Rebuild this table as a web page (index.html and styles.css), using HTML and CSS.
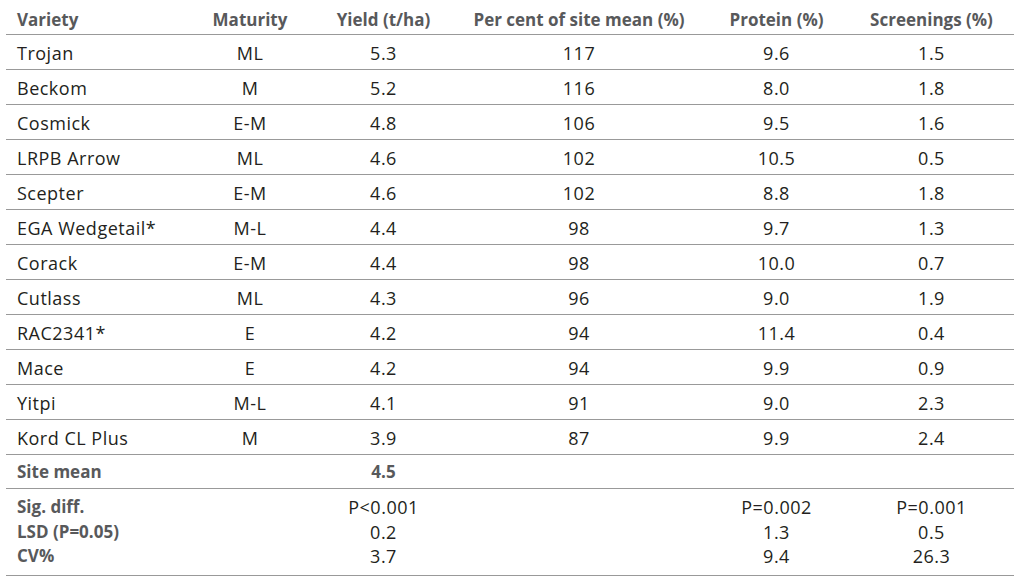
FILE: index.html
```html
<!DOCTYPE html>
<html>
<head>
<meta charset="utf-8">
<link rel="stylesheet" href="styles.css">
</head>
<body>
<table class="trial">
  <colgroup>
    <col class="c-variety">
    <col class="c-maturity">
    <col class="c-yield">
    <col class="c-percent">
    <col class="c-protein">
    <col class="c-screen">
  </colgroup>
  <thead>
    <tr>
      <th class="left">Variety</th>
      <th>Maturity</th>
      <th>Yield (t/ha)</th>
      <th>Per cent of site mean (%)</th>
      <th>Protein (%)</th>
      <th class="last">Screenings (%)</th>
    </tr>
  </thead>
  <tbody class="data">
    <tr><td class="left">Trojan</td><td>ML</td><td>5.3</td><td>117</td><td>9.6</td><td class="last">1.5</td></tr>
    <tr><td class="left">Beckom</td><td>M</td><td>5.2</td><td>116</td><td>8.0</td><td class="last">1.8</td></tr>
    <tr><td class="left">Cosmick</td><td>E-M</td><td>4.8</td><td>106</td><td>9.5</td><td class="last">1.6</td></tr>
    <tr><td class="left">LRPB Arrow</td><td>ML</td><td>4.6</td><td>102</td><td>10.5</td><td class="last">0.5</td></tr>
    <tr><td class="left">Scepter</td><td>E-M</td><td>4.6</td><td>102</td><td>8.8</td><td class="last">1.8</td></tr>
    <tr><td class="left">EGA Wedgetail*</td><td>M-L</td><td>4.4</td><td>98</td><td>9.7</td><td class="last">1.3</td></tr>
    <tr><td class="left">Corack</td><td>E-M</td><td>4.4</td><td>98</td><td>10.0</td><td class="last">0.7</td></tr>
    <tr><td class="left">Cutlass</td><td>ML</td><td>4.3</td><td>96</td><td>9.0</td><td class="last">1.9</td></tr>
    <tr><td class="left">RAC2341*</td><td>E</td><td>4.2</td><td>94</td><td>11.4</td><td class="last">0.4</td></tr>
    <tr><td class="left">Mace</td><td>E</td><td>4.2</td><td>94</td><td>9.9</td><td class="last">0.9</td></tr>
    <tr><td class="left">Yitpi</td><td>M-L</td><td>4.1</td><td>91</td><td>9.0</td><td class="last">2.3</td></tr>
    <tr><td class="left">Kord CL Plus</td><td>M</td><td>3.9</td><td>87</td><td>9.9</td><td class="last">2.4</td></tr>
    <tr class="mean"><td class="left strong">Site mean</td><td></td><td class="strong">4.5</td><td></td><td></td><td class="last"></td></tr>
  </tbody>
  <tbody class="stats">
    <tr class="first"><td class="left strong">Sig. diff.</td><td></td><td>P&lt;0.001</td><td></td><td>P=0.002</td><td class="last">P=0.001</td></tr>
    <tr><td class="left strong">LSD (P=0.05)</td><td></td><td>0.2</td><td></td><td>1.3</td><td class="last">0.5</td></tr>
    <tr class="end"><td class="left strong">CV%</td><td></td><td>3.7</td><td></td><td>9.4</td><td class="last">26.3</td></tr>
  </tbody>
</table>
</body>
</html>
```
FILE: styles.css
```css
html, body {
  margin: 0;
  padding: 0;
  background: #ffffff;
}
body {
  font-family: "Open Sans", "Noto Sans", sans-serif;
  color: #231f20;
}
.trial {
  margin-left: 6px;
  width: 1008px;
  table-layout: fixed;
  border-collapse: collapse;
  font-size: 18px;
  letter-spacing: 0.5px;
}
.c-variety { width: 194px; }
.c-maturity { width: 100px; }
.c-yield { width: 167px; }
.c-percent { width: 224px; }
.c-protein { width: 171px; }
.c-screen { width: 152px; }

.trial th,
.trial td {
  padding: 0;
  text-align: center;
  white-space: nowrap;
}
.trial .left {
  text-align: left;
  padding-left: 11px;
}
.trial .last {
  padding-right: 13px;
}
.trial th {
  height: 30px;
  padding-top: 4px;
  font-weight: 700;
  color: #58595b;
  font-size: 17px;
  letter-spacing: 0;
  border-bottom: 1px solid #999999;
  vertical-align: middle;
}
.data td {
  height: 32px;
  padding-top: 2px;
  border-bottom: 1px solid #999999;
  vertical-align: middle;
}
.data .mean td {
  height: 33px;
  padding-top: 0;
}
.trial .strong {
  font-weight: 700;
  color: #58595b;
  font-size: 17px;
  letter-spacing: 0;
}
.stats td {
  line-height: 24.5px;
  vertical-align: middle;
}
.stats .first td {
  padding-top: 6px;
}
.stats .end td {
  padding-bottom: 6px;
  border-bottom: 1px solid #999999;
}
```
